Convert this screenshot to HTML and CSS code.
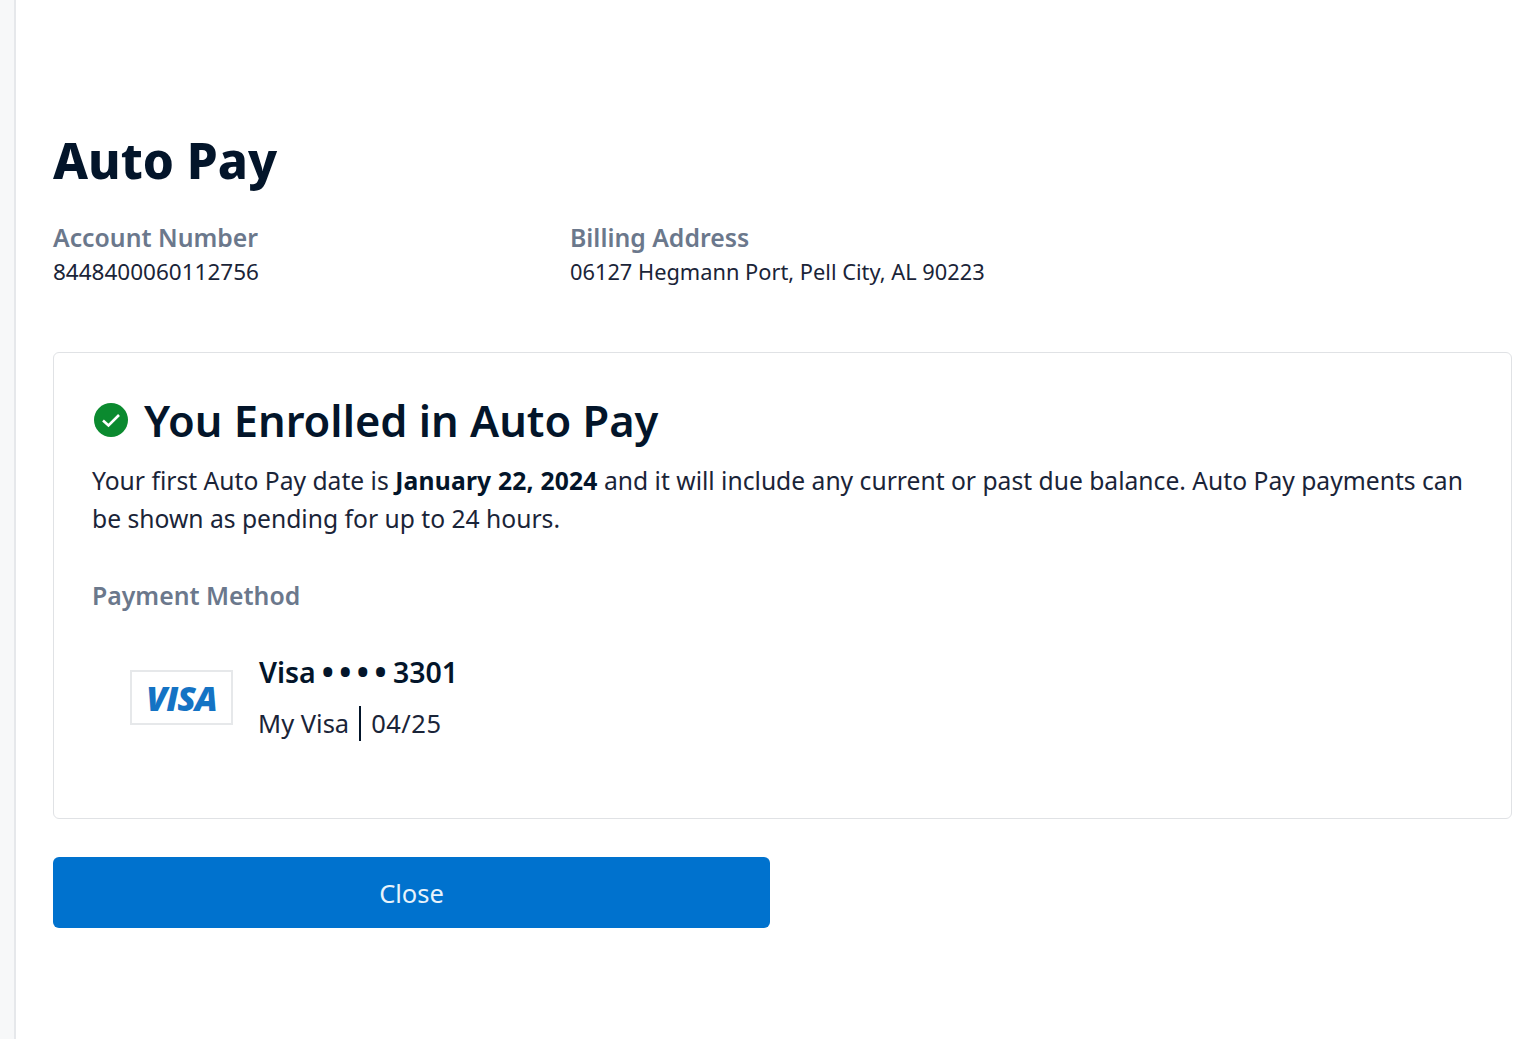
FILE: index.html
```html
<!DOCTYPE html>
<html lang="en">
<head>
<meta charset="utf-8">
<title>Auto Pay</title>
<link rel="stylesheet" href="styles.css">
</head>
<body>
<div class="shell">
  <div class="rail"></div>
  <main class="main">
    <h1 class="title">Auto Pay</h1>
    <div class="info">
      <div class="info-col">
        <div class="label">Account Number</div>
        <div class="value">8448400060112756</div>
      </div>
      <div class="info-col">
        <div class="label">Billing Address</div>
        <div class="value value-address">06127 Hegmann Port, Pell City, AL 90223</div>
      </div>
    </div>
    <section class="card">
      <div class="heading">
        <svg class="check" viewBox="0 0 34 34" aria-hidden="true">
          <circle cx="17" cy="17" r="17" fill="#0b8a2f"/>
          <path d="M9 17.5l5.5 5L25 12" fill="none" stroke="#fff" stroke-width="2.6"/>
        </svg>
        <h2 class="heading-text">You Enrolled in Auto Pay</h2>
      </div>
      <p class="body">Your first Auto Pay date is <strong>January 22, 2024</strong> and it will include any current or past due balance. Auto Pay payments can be shown as pending for up to 24 hours.</p>
      <div class="label method-label">Payment Method</div>
      <div class="method">
        <div class="visa-box"><span class="visa">VISA</span></div>
        <div class="method-text">
          <div class="method-name"><span>Visa</span><span class="dots">••••</span><span>3301</span></div>
          <div class="method-meta"><span>My Visa</span><span class="sep"></span><span class="expiry">04/25</span></div>
        </div>
      </div>
    </section>
    <button class="close" type="button">Close</button>
  </main>
</div>
</body>
</html>
```
FILE: styles.css
```css
* { box-sizing: border-box; }
html, body { margin: 0; height: 100%; background: #fff; }
body { font-family: "Noto Sans", "Open Sans", sans-serif; color: #0b1a2b; overflow: hidden; font-variant-ligatures: none; }
.shell { display: flex; height: 1039px; }
.rail { width: 16px; flex: none; background: #f7f8f9; border-right: 2px solid #e6e8eb; }
.main { flex: 1; padding: 130px 20px 0 37px; }
.title { margin: 0; font-size: 49.5px; line-height: 60px; font-weight: 800; color: #03152a; }
.info { display: flex; margin-top: 31px; }
.info-col { width: 517px; }
.label { font-size: 24.8px; line-height: 32px; font-weight: 600; color: #6b788c; }
.value { font-size: 22.5px; line-height: 32px; margin-top: 3px; color: #1a2438; }
.value-address { font-size: 21.8px; }
.card { margin-top: 64px; height: 467px; border: 1.5px solid #e0e2e5; border-radius: 6px; padding: 41px 38px 0; }
.heading { display: flex; align-items: center; gap: 16px; }
.check { width: 34px; height: 34px; flex: none; margin: -2px 0 0 2px; }
.heading-text { margin: 0; font-size: 43.4px; line-height: 54px; font-weight: 600; color: #03152a; }
.body { margin: 14px 0 0; font-size: 24.65px; line-height: 38px; color: #1a2438; }
.body strong { font-weight: 700; color: #03152a; letter-spacing: 0.2px; }
.method-label { margin-top: 41px; }
.method { display: flex; align-items: center; gap: 26px; margin: 42px 0 0 38px; }
.visa-box { width: 103px; height: 55px; margin-top: 1px; border: 2px solid #e6e8ea; display: flex; align-items: center; justify-content: center; }
.visa { font-family: "Open Sans", sans-serif; font-size: 34px; font-weight: 800; font-style: italic; color: #1473c4; letter-spacing: -1px; }
.method-text { display: flex; flex-direction: column; margin-top: 2px; }
.method-name { display: flex; align-items: center; gap: 6px; font-size: 28.5px; line-height: 34px; font-weight: 600; color: #03152a; }
.dots { letter-spacing: 5.5px; margin-right: -5px; font-size: 32px; font-weight: 700; }
.method-meta { display: flex; align-items: center; gap: 10px; margin: 16px 0 0 -1px; font-size: 25.5px; line-height: 36px; color: #1a2438; }
.expiry { letter-spacing: 0.5px; }
.sep { width: 2px; height: 35px; background: #03152a; }
.close { display: block; margin-top: 38px; width: 717px; height: 71px; border: 0; border-radius: 6px; background: #0072ce; color: #e8f3fb; font: 400 25.5px "Noto Sans", sans-serif; }
```
